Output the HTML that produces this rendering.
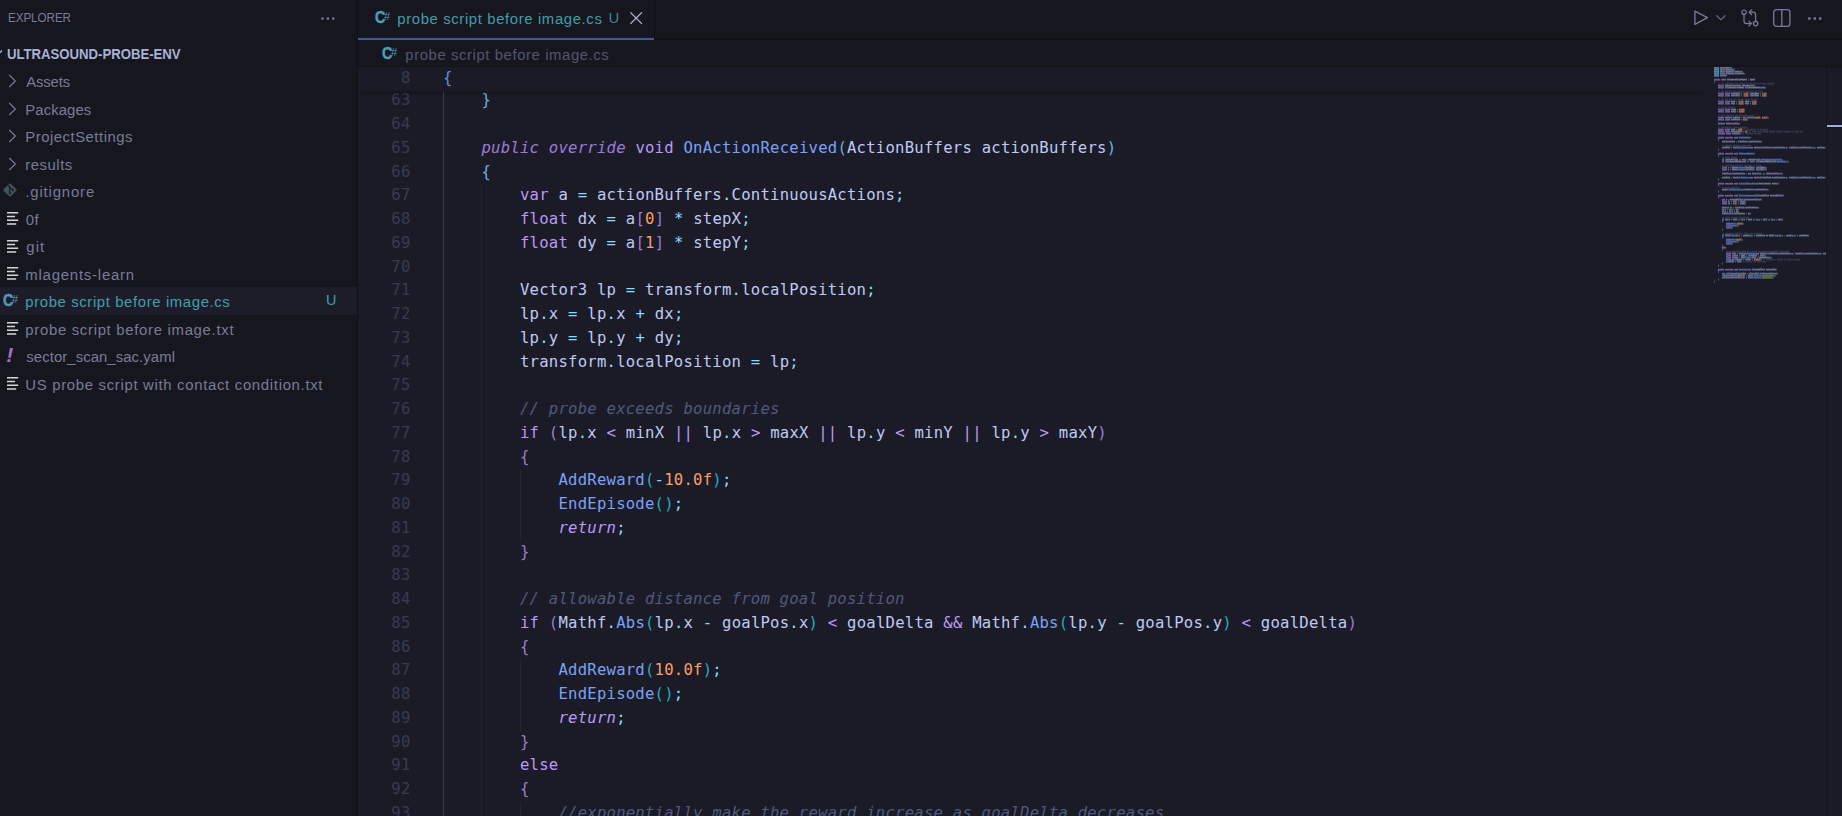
<!DOCTYPE html>
<html lang="en">
<head>
<meta charset="utf-8">
<title>probe script before image.cs - ultrasound-probe-env</title>
<style>
*{box-sizing:border-box;margin:0;padding:0}
html,body{width:1842px;height:816px;overflow:hidden;background:#1a1b26}
body{position:relative;font-family:"Liberation Sans",sans-serif;color:#787c99}
svg{position:absolute;overflow:visible}
.t{position:absolute;white-space:nowrap;transform-origin:0 50%}
/* ---------- sidebar ---------- */
#sidebar{position:absolute;left:0;top:0;width:358px;height:816px;background:#16161e;border-right:1px solid #101014;overflow:hidden}
#sb-title{top:9px;line-height:18px;color:#787c99}
#sb-head{top:45.3px;line-height:18px;font-weight:bold;color:#a9b1d6}
.row{position:absolute;left:0;width:357px;height:27.5px;white-space:nowrap}
.row .lbl{top:1.8px;line-height:27.5px;color:#787c99}
.row.sel{background:#1c1d29}
.row.sel .lbl{color:#449dab}
.row .badge{top:0;line-height:27.5px;color:#449dab}
.csi{position:absolute;width:0;height:0;white-space:nowrap;font-style:normal}
.csi b{position:absolute;left:-0.6px;top:-3.1px;font:bold 17px/20px "Liberation Sans",sans-serif;transform:scaleX(.84);transform-origin:0 50%;-webkit-text-stroke:0.5px currentColor}
.csi i{position:absolute;left:8.5px;top:0px;font:normal 10px/12px "Liberation Sans",sans-serif;font-style:normal;transform:scaleX(1.1);transform-origin:0 50%}
#mm{position:absolute;top:0;width:156.5px;height:216px;overflow:hidden;font-family:"DejaVu Sans Mono","Liberation Mono",monospace;font-size:2.3px;line-height:2px;transform:scaleX(.7222);transform-origin:0 0;color:#c0caf5;white-space:pre}
#mm p{height:2px}
#mm i{font-style:normal}
.mk{color:#bb9af7}.mu{color:#7dcfff}.mf{color:#7aa2f7}.mp{color:#89ddff}.mn{color:#ff9e64}.mc{color:#51597d}.ms{color:#9ece6a}.mv{color:#c0caf5}
/* ---------- editor ---------- */
#tabs{position:absolute;left:358px;top:0;width:1484px;height:40px;background:#16161e;border-bottom:2px solid #101014}
#tab{position:absolute;left:0;top:0;width:297px;height:40px;background:#16161e;border-right:1px solid #101014}
#tab:after{content:'';position:absolute;left:0;top:38px;width:296px;height:2px;background:#3d59a1}
#tab .lbl{top:8px;line-height:22px;color:#449dab}
#tab .u{top:7px;line-height:22px;color:#449dab;opacity:.85}
#crumbs{position:absolute;left:358px;top:40px;width:1484px;height:27px;background:#16161e;border-bottom:1px solid #13131a}
#crumbs .lbl{top:3.5px;line-height:22px;color:#515670}
#editor{position:absolute;left:358px;top:67px;width:1484px;height:749px;background:#1a1b26;overflow:hidden}
.ln{position:absolute;left:0;width:52.6px;text-align:right;font-family:"DejaVu Sans Mono","Liberation Mono",monospace;font-size:15.6px;line-height:23.75px;height:23.75px;color:#363b54;white-space:pre;letter-spacing:0.229px}
.cl{position:absolute;left:85px;font-family:"DejaVu Sans Mono","Liberation Mono",monospace;font-size:15.6px;line-height:23.75px;height:23.75px;color:#c0caf5;white-space:pre;letter-spacing:0.229px}
.g{position:absolute;width:1px;background:#232433}
.ga{background:#363b54}
#sticky{position:absolute;left:0;top:0;width:1348px;height:24px;background:#1a1b26;box-shadow:0 5px 2.5px -2.5px rgba(0,0,0,.22)}
#vsb{position:absolute;left:1468px;top:0;width:16px;height:749px;background:#1a1b26;border-left:1px solid #13131b;border-top:1px solid #171821}
.k{color:#bb9af7}.m{color:#9d7cd8;font-style:italic}.r{color:#bb9af7;font-style:italic}.f{color:#7aa2f7}.p{color:#89ddff}.n{color:#ff9e64}
.c{color:#51597d;font-style:italic}
.b1{color:#698cd6}.b2{color:#68b3de}.b3{color:#9a7ecc}.b4{color:#25aac2}
</style>
</head>
<body>
<div id="sidebar">
<div id="sb-title" class="t " style="left:8.07px;font-size:13.7px;letter-spacing:-0.115px;transform:scaleX(.855);">EXPLORER</div>
<svg style="left:321px;top:16.5px" width="14" height="3" viewBox="0 0 14 3"><rect x="0.3" y="0.4" width="2.3" height="2.3" fill="#787c99"/><rect x="5.7" y="0.4" width="2.3" height="2.3" fill="#787c99"/><rect x="11.1" y="0.4" width="2.3" height="2.3" fill="#787c99"/></svg>
<svg style="left:-9px;top:47px" width="12" height="12" viewBox="0 0 12 12"><path d="M1 3.5 L6 8.5 L11 3.5" fill="none" stroke="#a9b1d6" stroke-width="1.3"/></svg>
<div id="sb-head" class="t " style="left:7.46px;font-size:14.2px;letter-spacing:-0.033px;transform:scaleX(.93);">ULTRASOUND-PROBE-ENV</div>
<div class="row " style="top:67.25px"><svg style="left:7.8px;top:7.2px" width="9" height="14" viewBox="0 0 9 14"><path d="M1.2 1 L7.4 7 L1.2 13" fill="none" stroke="#787c99" stroke-width="1.15"/></svg><span  class="t lbl" style="left:26.30px;font-size:14.9px;letter-spacing:-0.179px;">Assets</span></div>
<div class="row " style="top:94.75px"><svg style="left:7.8px;top:7.2px" width="9" height="14" viewBox="0 0 9 14"><path d="M1.2 1 L7.4 7 L1.2 13" fill="none" stroke="#787c99" stroke-width="1.15"/></svg><span  class="t lbl" style="left:25.30px;font-size:14.9px;letter-spacing:0.084px;">Packages</span></div>
<div class="row " style="top:122.25px"><svg style="left:7.8px;top:7.2px" width="9" height="14" viewBox="0 0 9 14"><path d="M1.2 1 L7.4 7 L1.2 13" fill="none" stroke="#787c99" stroke-width="1.15"/></svg><span  class="t lbl" style="left:25.30px;font-size:14.9px;letter-spacing:0.500px;">ProjectSettings</span></div>
<div class="row " style="top:149.75px"><svg style="left:7.8px;top:7.2px" width="9" height="14" viewBox="0 0 9 14"><path d="M1.2 1 L7.4 7 L1.2 13" fill="none" stroke="#787c99" stroke-width="1.15"/></svg><span  class="t lbl" style="left:25.30px;font-size:14.9px;letter-spacing:0.525px;">results</span></div>
<div class="row " style="top:177.25px"><svg style="left:2.85px;top:5.65px" width="14" height="14" viewBox="0 0 14 14"><rect x="2.05" y="2.05" width="9.9" height="9.9" rx="0.9" transform="rotate(45 7 7)" fill="#41535b"/><path d="M4.9 2.4 L10 7.2 M6.85 4.3 L6.85 10.2" stroke="#16161e" stroke-width="1.15" fill="none"/><circle cx="10" cy="7.2" r="0.95" fill="#16161e"/><circle cx="6.85" cy="10.2" r="0.95" fill="#16161e"/></svg><span  class="t lbl" style="left:25.30px;font-size:14.9px;letter-spacing:0.845px;">.gitignore</span></div>
<div class="row " style="top:204.75px"><svg style="left:7px;top:7.6px" width="12" height="13" viewBox="0 0 12 13"><rect x="0" y="0" width="11.2" height="1.5" fill="#d4d7d6"/><rect x="0" y="3.75" width="8" height="1.5" fill="#d4d7d6"/><rect x="0" y="7.5" width="11.2" height="1.5" fill="#d4d7d6"/><rect x="0" y="11.25" width="9.2" height="1.5" fill="#d4d7d6"/></svg><span  class="t lbl" style="left:25.80px;font-size:14.9px;letter-spacing:0.388px;">0f</span></div>
<div class="row " style="top:232.25px"><svg style="left:7px;top:7.6px" width="12" height="13" viewBox="0 0 12 13"><rect x="0" y="0" width="11.2" height="1.5" fill="#d4d7d6"/><rect x="0" y="3.75" width="8" height="1.5" fill="#d4d7d6"/><rect x="0" y="7.5" width="11.2" height="1.5" fill="#d4d7d6"/><rect x="0" y="11.25" width="9.2" height="1.5" fill="#d4d7d6"/></svg><span  class="t lbl" style="left:26.30px;font-size:14.9px;letter-spacing:1.085px;">git</span></div>
<div class="row " style="top:259.75px"><svg style="left:7px;top:7.6px" width="12" height="13" viewBox="0 0 12 13"><rect x="0" y="0" width="11.2" height="1.5" fill="#d4d7d6"/><rect x="0" y="3.75" width="8" height="1.5" fill="#d4d7d6"/><rect x="0" y="7.5" width="11.2" height="1.5" fill="#d4d7d6"/><rect x="0" y="11.25" width="9.2" height="1.5" fill="#d4d7d6"/></svg><span  class="t lbl" style="left:25.30px;font-size:14.9px;letter-spacing:0.796px;">mlagents-learn</span></div>
<div class="row sel" style="top:287.25px"><span class="csi" style="left:3.4px;top:6.9px;color:#519aba"><b>C</b><i>#</i></span><span  class="t lbl" style="left:25.30px;font-size:14.9px;letter-spacing:0.615px;">probe script before image.cs</span><span  class="t badge" style="left:326.10px;font-size:14.4px;letter-spacing:0.640px;">U</span></div>
<div class="row " style="top:314.75px"><svg style="left:7px;top:7.6px" width="12" height="13" viewBox="0 0 12 13"><rect x="0" y="0" width="11.2" height="1.5" fill="#d4d7d6"/><rect x="0" y="3.75" width="8" height="1.5" fill="#d4d7d6"/><rect x="0" y="7.5" width="11.2" height="1.5" fill="#d4d7d6"/><rect x="0" y="11.25" width="9.2" height="1.5" fill="#d4d7d6"/></svg><span  class="t lbl" style="left:25.30px;font-size:14.9px;letter-spacing:0.697px;">probe script before image.txt</span></div>
<div class="row " style="top:342.25px"><span style="position:absolute;left:6.3px;top:0;font-size:21px;line-height:26px;font-weight:bold;font-style:italic;color:#a074c4">!</span><span  class="t lbl" style="left:26.30px;font-size:14.9px;letter-spacing:0.072px;">sector_scan_sac.yaml</span></div>
<div class="row " style="top:369.75px"><svg style="left:7px;top:7.6px" width="12" height="13" viewBox="0 0 12 13"><rect x="0" y="0" width="11.2" height="1.5" fill="#d4d7d6"/><rect x="0" y="3.75" width="8" height="1.5" fill="#d4d7d6"/><rect x="0" y="7.5" width="11.2" height="1.5" fill="#d4d7d6"/><rect x="0" y="11.25" width="9.2" height="1.5" fill="#d4d7d6"/></svg><span  class="t lbl" style="left:25.30px;font-size:14.9px;letter-spacing:0.688px;">US probe script with contact condition.txt</span></div>
</div>
<div id="tabs">
<div id="tab"><span class="csi" style="left:17.4px;top:10.85px;color:#519aba"><b>C</b><i>#</i></span><span  class="t lbl" style="left:39.30px;font-size:14.9px;letter-spacing:0.617px;">probe script before image.cs</span><span  class="t u" style="left:250.45px;font-size:14.9px;letter-spacing:0.890px;">U</span><svg style="left:272.2px;top:11.9px" width="13" height="13" viewBox="0 0 13 13"><path d="M0.4 0.4 L11.9 11.9 M11.9 0.4 L0.4 11.9" stroke="#b4bce0" stroke-width="1.25" fill="none"/></svg></div>
<svg style="left:1336px;top:10.4px" width="15" height="16" viewBox="0 0 15 16"><path d="M0.9 1.2 L13.4 7.6 L0.9 14.4 Z" fill="none" stroke="#787c99" stroke-width="1.3" stroke-linejoin="round"/></svg><svg style="left:1357.5px;top:15px" width="10" height="6" viewBox="0 0 10 6"><path d="M0.4 0.4 L4.9 4.8 L9.4 0.4" fill="none" stroke="#787c99" stroke-width="1.1"/></svg><svg style="left:1382.5px;top:8.8px" width="18" height="18" viewBox="0 0 18 18"><circle cx="3" cy="3.2" r="2.2" fill="none" stroke="#787c99" stroke-width="1.2"/><circle cx="14.6" cy="14.6" r="2.2" fill="none" stroke="#787c99" stroke-width="1.2"/><path d="M3 5.4 V12 Q3 14.6 5.6 14.6 H10.3 M7.6 11.8 L10.4 14.6 L7.6 17.4" fill="none" stroke="#787c99" stroke-width="1.2"/><path d="M14.6 12.4 V5.8 Q14.6 3.2 12 3.2 H8.2 M11 0.4 L8.2 3.2 L11 6" fill="none" stroke="#787c99" stroke-width="1.2"/></svg><svg style="left:1415.2px;top:8.8px" width="18" height="18" viewBox="0 0 18 18"><rect x="0.7" y="0.7" width="16.2" height="16.6" rx="2.6" fill="none" stroke="#787c99" stroke-width="1.3"/><path d="M8.8 0.7 V17.3" stroke="#787c99" stroke-width="1.3"/></svg><svg style="left:1449.7px;top:16.6px" width="14" height="3" viewBox="0 0 14 3"><rect x="0.2" y="0.3" width="2.4" height="2.4" fill="#787c99"/><rect x="5.6" y="0.3" width="2.4" height="2.4" fill="#787c99"/><rect x="11" y="0.3" width="2.4" height="2.4" fill="#787c99"/></svg></div>
<div id="crumbs"><span class="csi" style="left:24.8px;top:6.7px;color:#519aba"><b>C</b><i>#</i></span><span  class="t lbl" style="left:47.30px;font-size:14.9px;letter-spacing:0.579px;">probe script before image.cs</span></div>
<div id="editor">
<div class="g ga" style="left:84.7px;top:22.32px;height:726.67px"></div>
<div class="g" style="left:123.2px;top:117.33px;height:631.67px"></div>
<div class="g" style="left:161.7px;top:402.32px;height:71.25px"></div>
<div class="g" style="left:161.7px;top:592.33px;height:71.25px"></div>
<div class="g" style="left:161.7px;top:734.83px;height:23.75px"></div>
<div class="ln" style="top:22.32px">63</div><div class="cl" style="top:22.32px">    <span class="b2">}</span></div>
<div class="ln" style="top:46.08px">64</div><div class="cl" style="top:46.08px"></div>
<div class="ln" style="top:69.83px">65</div><div class="cl" style="top:69.83px">    <span class="m">public override</span> <span class="k">void</span> <span class="f">OnActionReceived</span><span class="b2">(</span>ActionBuffers actionBuffers<span class="b2">)</span></div>
<div class="ln" style="top:93.58px">66</div><div class="cl" style="top:93.58px">    <span class="b2">{</span></div>
<div class="ln" style="top:117.33px">67</div><div class="cl" style="top:117.33px">        <span class="k">var</span> a <span class="p">=</span> actionBuffers<span class="p">.</span>ContinuousActions<span class="p">;</span></div>
<div class="ln" style="top:141.07px">68</div><div class="cl" style="top:141.07px">        <span class="k">float</span> dx <span class="p">=</span> a<span class="b3">[</span><span class="n">0</span><span class="b3">]</span> <span class="p">*</span> stepX<span class="p">;</span></div>
<div class="ln" style="top:164.82px">69</div><div class="cl" style="top:164.82px">        <span class="k">float</span> dy <span class="p">=</span> a<span class="b3">[</span><span class="n">1</span><span class="b3">]</span> <span class="p">*</span> stepY<span class="p">;</span></div>
<div class="ln" style="top:188.57px">70</div><div class="cl" style="top:188.57px"></div>
<div class="ln" style="top:212.32px">71</div><div class="cl" style="top:212.32px">        Vector3 lp <span class="p">=</span> transform<span class="p">.</span>localPosition<span class="p">;</span></div>
<div class="ln" style="top:236.07px">72</div><div class="cl" style="top:236.07px">        lp<span class="p">.</span>x <span class="p">=</span> lp<span class="p">.</span>x <span class="p">+</span> dx<span class="p">;</span></div>
<div class="ln" style="top:259.82px">73</div><div class="cl" style="top:259.82px">        lp<span class="p">.</span>y <span class="p">=</span> lp<span class="p">.</span>y <span class="p">+</span> dy<span class="p">;</span></div>
<div class="ln" style="top:283.57px">74</div><div class="cl" style="top:283.57px">        transform<span class="p">.</span>localPosition <span class="p">=</span> lp<span class="p">;</span></div>
<div class="ln" style="top:307.32px">75</div><div class="cl" style="top:307.32px"></div>
<div class="ln" style="top:331.07px">76</div><div class="cl" style="top:331.07px">        <span class="c">// probe exceeds boundaries</span></div>
<div class="ln" style="top:354.82px">77</div><div class="cl" style="top:354.82px">        <span class="k">if</span> <span class="b3">(</span>lp<span class="p">.</span>x <span class="k">&lt;</span> minX <span class="k">||</span> lp<span class="p">.</span>x <span class="k">&gt;</span> maxX <span class="k">||</span> lp<span class="p">.</span>y <span class="k">&lt;</span> minY <span class="k">||</span> lp<span class="p">.</span>y <span class="k">&gt;</span> maxY<span class="b3">)</span></div>
<div class="ln" style="top:378.57px">78</div><div class="cl" style="top:378.57px">        <span class="b3">{</span></div>
<div class="ln" style="top:402.32px">79</div><div class="cl" style="top:402.32px">            <span class="f">AddReward</span><span class="b4">(</span><span class="p">-</span><span class="n">10.0f</span><span class="b4">)</span><span class="p">;</span></div>
<div class="ln" style="top:426.07px">80</div><div class="cl" style="top:426.07px">            <span class="f">EndEpisode</span><span class="b4">()</span><span class="p">;</span></div>
<div class="ln" style="top:449.82px">81</div><div class="cl" style="top:449.82px">            <span class="r">return</span><span class="p">;</span></div>
<div class="ln" style="top:473.57px">82</div><div class="cl" style="top:473.57px">        <span class="b3">}</span></div>
<div class="ln" style="top:497.32px">83</div><div class="cl" style="top:497.32px"></div>
<div class="ln" style="top:521.08px">84</div><div class="cl" style="top:521.08px">        <span class="c">// allowable distance from goal position</span></div>
<div class="ln" style="top:544.83px">85</div><div class="cl" style="top:544.83px">        <span class="k">if</span> <span class="b3">(</span>Mathf<span class="p">.</span><span class="f">Abs</span><span class="b4">(</span>lp<span class="p">.</span>x <span class="p">-</span> goalPos<span class="p">.</span>x<span class="b4">)</span> <span class="k">&lt;</span> goalDelta <span class="k">&amp;&amp;</span> Mathf<span class="p">.</span><span class="f">Abs</span><span class="b4">(</span>lp<span class="p">.</span>y <span class="p">-</span> goalPos<span class="p">.</span>y<span class="b4">)</span> <span class="k">&lt;</span> goalDelta<span class="b3">)</span></div>
<div class="ln" style="top:568.58px">86</div><div class="cl" style="top:568.58px">        <span class="b3">{</span></div>
<div class="ln" style="top:592.33px">87</div><div class="cl" style="top:592.33px">            <span class="f">AddReward</span><span class="b4">(</span><span class="n">10.0f</span><span class="b4">)</span><span class="p">;</span></div>
<div class="ln" style="top:616.08px">88</div><div class="cl" style="top:616.08px">            <span class="f">EndEpisode</span><span class="b4">()</span><span class="p">;</span></div>
<div class="ln" style="top:639.83px">89</div><div class="cl" style="top:639.83px">            <span class="r">return</span><span class="p">;</span></div>
<div class="ln" style="top:663.58px">90</div><div class="cl" style="top:663.58px">        <span class="b3">}</span></div>
<div class="ln" style="top:687.33px">91</div><div class="cl" style="top:687.33px">        <span class="k">else</span></div>
<div class="ln" style="top:711.08px">92</div><div class="cl" style="top:711.08px">        <span class="b3">{</span></div>
<div class="ln" style="top:734.83px">93</div><div class="cl" style="top:734.83px">            <span class="c">//exponentially make the reward increase as goalDelta decreases</span></div>
<div id="sticky"><div class="ln" style="top:0.3px">8</div><div class="cl" style="top:0.3px"><span class="b1">{</span></div></div>
<svg style="left:1356px;top:0" width="113" height="216" viewBox="0 0 113 216" shape-rendering="crispEdges"><path fill="#7dcfff" fill-opacity="0.38" d="M0 0h5v2h-5zM0 2h5v2h-5zM0 4h5v2h-5zM0 6h5v2h-5zM0 8h5v2h-5z"/><path fill="#c0caf5" fill-opacity="0.22" d="M6 0h11v2h-11zM6 2h5v2h-5zM12 2h8v2h-8zM6 4h5v2h-5zM12 4h8v2h-8zM21 4h7v2h-7zM6 6h5v2h-5zM12 6h8v2h-8zM21 6h9v2h-9zM6 8h6v2h-6zM13 12h20v2h-20zM36 12h5v2h-5zM11 18h16v2h-16zM28 18h12v2h-12zM11 20h19v2h-19zM31 20h20v2h-20zM17 26h9v2h-9zM36 26h9v2h-9zM17 28h9v2h-9zM36 28h9v2h-9zM17 34h4v2h-4zM31 34h4v2h-4zM17 36h4v2h-4zM31 36h4v2h-4zM17 42h5v2h-5zM17 44h5v2h-5zM11 50h7v2h-7zM19 50h7v2h-7zM33 50h7v2h-7zM17 52h9v2h-9zM4 56h7v2h-7zM12 56h13v2h-13zM17 62h4v2h-4zM17 64h11v2h-11zM18 66h8v2h-8zM8 74h13v2h-13zM24 74h9v2h-9zM34 74h13v2h-13zM8 80h8v2h-8zM19 80h7v2h-7zM40 80h7v2h-7zM48 80h9v2h-9zM58 80h13v2h-13zM72 80h1v2h-1zM75 80h9v2h-9zM85 80h13v2h-13zM99 80h1v2h-1zM103 80h7v2h-7zM12 92h12v2h-12zM28 92h4v2h-4zM34 92h12v2h-12zM12 94h20v2h-20zM36 94h4v2h-4zM42 94h20v2h-20zM14 100h1v2h-1zM18 100h6v2h-6zM31 100h9v2h-9zM42 100h9v2h-9zM14 102h1v2h-1zM18 102h6v2h-6zM31 102h9v2h-9zM42 102h9v2h-9zM8 106h9v2h-9zM18 106h13v2h-13zM38 106h7v2h-7zM46 106h1v2h-1zM49 106h1v2h-1zM52 106h13v2h-13zM66 106h1v2h-1zM8 110h8v2h-8zM19 110h7v2h-7zM40 110h7v2h-7zM48 110h9v2h-9zM58 110h13v2h-13zM72 110h1v2h-1zM75 110h9v2h-9zM85 110h13v2h-13zM99 110h1v2h-1zM103 110h7v2h-7zM45 116h12v2h-12zM58 116h6v2h-6zM8 122h6v2h-6zM30 122h9v2h-9zM40 122h13v2h-13zM42 128h13v2h-13zM56 128h13v2h-13zM12 132h1v2h-1zM16 132h13v2h-13zM30 132h17v2h-17zM14 134h2v2h-2zM19 134h1v2h-1zM26 134h5v2h-5zM14 136h2v2h-2zM19 136h1v2h-1zM26 136h5v2h-5zM8 140h7v2h-7zM16 140h2v2h-2zM21 140h9v2h-9zM31 140h13v2h-13zM8 142h2v2h-2zM11 142h1v2h-1zM15 142h2v2h-2zM18 142h1v2h-1zM22 142h2v2h-2zM8 144h2v2h-2zM11 144h1v2h-1zM15 144h2v2h-2zM18 144h1v2h-1zM22 144h2v2h-2zM8 146h9v2h-9zM18 146h13v2h-13zM34 146h2v2h-2zM12 152h2v2h-2zM15 152h1v2h-1zM19 152h4v2h-4zM27 152h2v2h-2zM30 152h1v2h-1zM34 152h4v2h-4zM42 152h2v2h-2zM45 152h1v2h-1zM49 152h4v2h-4zM57 152h2v2h-2zM60 152h1v2h-1zM64 152h4v2h-4zM12 168h5v2h-5zM22 168h2v2h-2zM25 168h1v2h-1zM29 168h7v2h-7zM37 168h1v2h-1zM42 168h9v2h-9zM55 168h5v2h-5zM65 168h2v2h-2zM68 168h1v2h-1zM72 168h7v2h-7zM80 168h1v2h-1zM85 168h9v2h-9zM18 186h4v2h-4zM25 186h7v2h-7zM46 186h7v2h-7zM54 186h9v2h-9zM64 186h13v2h-13zM78 186h1v2h-1zM81 186h9v2h-9zM91 186h13v2h-13zM105 186h1v2h-1zM109 186h4v2h-4zM18 188h6v2h-6zM27 188h4v2h-4zM35 188h8v2h-8zM46 188h4v2h-4zM18 190h6v2h-6zM27 190h5v2h-5zM38 190h4v2h-4zM45 190h11v2h-11zM22 192h6v2h-6zM31 192h6v2h-6zM12 194h8v2h-8zM23 194h4v2h-4zM38 202h13v2h-13zM52 202h10v2h-10zM12 206h20v2h-20zM35 206h10v2h-10zM46 206h17v2h-17zM8 208h20v2h-20zM34 208h5v2h-5zM8 210h20v2h-20zM34 210h5v2h-5z"/><path fill="#89ddff" fill-opacity="0.18" d="M17 0h1v2h-1zM11 2h1v2h-1zM20 2h1v2h-1zM11 4h1v2h-1zM20 4h1v2h-1zM28 4h1v2h-1zM11 6h1v2h-1zM20 6h1v2h-1zM30 6h1v2h-1zM12 8h1v2h-1zM34 12h1v2h-1zM0 14h1v2h-1zM40 18h1v2h-1zM51 20h1v2h-1zM27 26h1v2h-1zM29 26h1v2h-1zM34 26h1v2h-1zM46 26h1v2h-1zM52 26h1v2h-1zM27 28h1v2h-1zM29 28h1v2h-1zM34 28h1v2h-1zM46 28h1v2h-1zM52 28h1v2h-1zM22 34h1v2h-1zM24 34h1v2h-1zM29 34h1v2h-1zM36 34h1v2h-1zM42 34h1v2h-1zM22 36h1v2h-1zM24 36h1v2h-1zM29 36h1v2h-1zM36 36h1v2h-1zM42 36h1v2h-1zM23 42h1v2h-1zM30 42h1v2h-1zM23 44h1v2h-1zM30 44h1v2h-1zM27 50h1v2h-1zM40 50h1v2h-1zM46 50h1v2h-1zM53 50h2v2h-2zM27 52h1v2h-1zM33 52h1v2h-1zM25 56h1v2h-1zM22 62h1v2h-1zM28 62h1v2h-1zM29 64h1v2h-1zM33 64h1v2h-1zM26 66h1v2h-1zM35 70h2v2h-2zM4 72h1v2h-1zM22 74h1v2h-1zM33 74h1v2h-1zM47 74h1v2h-1zM17 80h1v2h-1zM26 80h1v2h-1zM35 80h1v2h-1zM47 80h1v2h-1zM57 80h1v2h-1zM71 80h1v2h-1zM73 80h1v2h-1zM84 80h1v2h-1zM98 80h1v2h-1zM100 80h2v2h-2zM110 80h2v2h-2zM4 82h1v2h-1zM39 86h2v2h-2zM4 88h1v2h-1zM11 92h1v2h-1zM25 92h2v2h-2zM32 92h1v2h-1zM46 92h1v2h-1zM66 92h3v2h-3zM11 94h1v2h-1zM33 94h2v2h-2zM40 94h1v2h-1zM62 94h1v2h-1zM72 94h3v2h-3zM16 100h1v2h-1zM24 100h1v2h-1zM30 100h1v2h-1zM40 100h1v2h-1zM51 100h2v2h-2zM16 102h1v2h-1zM24 102h1v2h-1zM30 102h1v2h-1zM40 102h1v2h-1zM51 102h2v2h-2zM17 106h1v2h-1zM32 106h1v2h-1zM45 106h1v2h-1zM47 106h1v2h-1zM50 106h1v2h-1zM65 106h1v2h-1zM67 106h2v2h-2zM17 110h1v2h-1zM26 110h1v2h-1zM35 110h1v2h-1zM47 110h1v2h-1zM57 110h1v2h-1zM71 110h1v2h-1zM73 110h1v2h-1zM84 110h1v2h-1zM98 110h1v2h-1zM100 110h2v2h-2zM110 110h2v2h-2zM4 112h1v2h-1zM44 116h1v2h-1zM64 116h1v2h-1zM4 118h1v2h-1zM14 122h1v2h-1zM29 122h1v2h-1zM39 122h1v2h-1zM53 122h2v2h-2zM4 124h1v2h-1zM41 128h1v2h-1zM69 128h1v2h-1zM4 130h1v2h-1zM14 132h1v2h-1zM29 132h1v2h-1zM47 132h1v2h-1zM17 134h1v2h-1zM20 134h1v2h-1zM22 134h1v2h-1zM24 134h1v2h-1zM31 134h1v2h-1zM17 136h1v2h-1zM20 136h1v2h-1zM22 136h1v2h-1zM24 136h1v2h-1zM31 136h1v2h-1zM19 140h1v2h-1zM30 140h1v2h-1zM44 140h1v2h-1zM10 142h1v2h-1zM13 142h1v2h-1zM17 142h1v2h-1zM20 142h1v2h-1zM24 142h1v2h-1zM10 144h1v2h-1zM13 144h1v2h-1zM17 144h1v2h-1zM20 144h1v2h-1zM24 144h1v2h-1zM17 146h1v2h-1zM32 146h1v2h-1zM36 146h1v2h-1zM11 152h1v2h-1zM14 152h1v2h-1zM17 152h1v2h-1zM24 152h2v2h-2zM29 152h1v2h-1zM32 152h1v2h-1zM39 152h2v2h-2zM44 152h1v2h-1zM47 152h1v2h-1zM54 152h2v2h-2zM59 152h1v2h-1zM62 152h1v2h-1zM68 152h1v2h-1zM8 154h1v2h-1zM21 156h2v2h-2zM28 156h2v2h-2zM22 158h3v2h-3zM18 160h1v2h-1zM8 162h1v2h-1zM11 168h1v2h-1zM17 168h1v2h-1zM21 168h1v2h-1zM24 168h1v2h-1zM27 168h1v2h-1zM36 168h1v2h-1zM38 168h1v2h-1zM40 168h1v2h-1zM52 168h2v2h-2zM60 168h1v2h-1zM64 168h1v2h-1zM67 168h1v2h-1zM70 168h1v2h-1zM79 168h1v2h-1zM81 168h1v2h-1zM83 168h1v2h-1zM94 168h1v2h-1zM8 170h1v2h-1zM21 172h1v2h-1zM27 172h2v2h-2zM22 174h3v2h-3zM18 176h1v2h-1zM8 178h1v2h-1zM8 182h1v2h-1zM23 186h1v2h-1zM32 186h1v2h-1zM41 186h1v2h-1zM53 186h1v2h-1zM63 186h1v2h-1zM77 186h1v2h-1zM79 186h1v2h-1zM90 186h1v2h-1zM104 186h1v2h-1zM106 186h2v2h-2zM25 188h1v2h-1zM32 188h1v2h-1zM34 188h1v2h-1zM44 188h1v2h-1zM50 188h2v2h-2zM25 190h1v2h-1zM32 190h1v2h-1zM36 190h2v2h-2zM43 190h1v2h-1zM56 190h2v2h-2zM21 192h1v2h-1zM29 192h1v2h-1zM38 192h1v2h-1zM46 192h2v2h-2zM21 194h1v2h-1zM27 194h1v2h-1zM8 196h1v2h-1zM4 198h1v2h-1zM34 202h1v2h-1zM62 202h1v2h-1zM4 204h1v2h-1zM33 206h1v2h-1zM45 206h1v2h-1zM63 206h1v2h-1zM28 208h1v2h-1zM30 208h1v2h-1zM32 208h1v2h-1zM39 208h1v2h-1zM47 208h1v2h-1zM60 208h2v2h-2zM28 210h1v2h-1zM30 210h1v2h-1zM32 210h1v2h-1zM39 210h1v2h-1zM47 210h1v2h-1zM58 210h2v2h-2zM4 212h1v2h-1zM0 214h1v2h-1z"/><path fill="#bb9af7" fill-opacity="0.30" d="M0 12h6v2h-6zM7 12h5v2h-5zM4 18h6v2h-6zM4 20h6v2h-6zM4 26h6v2h-6zM11 26h5v2h-5zM4 28h6v2h-6zM11 28h5v2h-5zM4 34h6v2h-6zM11 34h5v2h-5zM4 36h6v2h-6zM11 36h5v2h-5zM4 42h6v2h-6zM11 42h5v2h-5zM4 44h6v2h-6zM11 44h5v2h-5zM4 50h6v2h-6zM29 50h3v2h-3zM4 52h6v2h-6zM11 52h5v2h-5zM4 62h6v2h-6zM11 62h5v2h-5zM4 64h6v2h-6zM11 64h5v2h-5zM4 66h7v2h-7zM12 66h5v2h-5zM4 70h6v2h-6zM11 70h8v2h-8zM20 70h4v2h-4zM36 80h3v2h-3zM4 86h6v2h-6zM11 86h8v2h-8zM20 86h4v2h-4zM8 92h2v2h-2zM8 94h2v2h-2zM8 100h5v2h-5zM8 102h5v2h-5zM34 106h3v2h-3zM36 110h3v2h-3zM4 116h6v2h-6zM11 116h8v2h-8zM20 116h4v2h-4zM4 128h6v2h-6zM11 128h8v2h-8zM20 128h4v2h-4zM8 132h3v2h-3zM8 134h5v2h-5zM8 136h5v2h-5zM8 152h2v2h-2zM12 160h6v2h-6zM8 168h2v2h-2zM12 176h6v2h-6zM8 180h4v2h-4zM12 186h5v2h-5zM42 186h3v2h-3zM12 188h5v2h-5zM12 190h5v2h-5zM4 202h6v2h-6zM11 202h8v2h-8zM20 202h4v2h-4zM35 202h2v2h-2zM8 206h3v2h-3z"/><path fill="#51597d" fill-opacity="0.22" d="M4 16h2v2h-2zM7 16h3v2h-3zM11 16h9v2h-9zM21 16h3v2h-3zM25 16h6v2h-6zM32 16h2v2h-2zM35 16h3v2h-3zM39 16h5v2h-5zM45 16h2v2h-2zM48 16h4v2h-4zM53 16h7v2h-7zM4 24h2v2h-2zM7 24h3v2h-3zM11 24h3v2h-3zM15 24h3v2h-3zM19 24h3v2h-3zM23 24h8v2h-8zM32 24h8v2h-8zM41 24h2v2h-2zM44 24h5v2h-5zM4 32h2v2h-2zM7 32h3v2h-3zM11 32h3v2h-3zM15 32h3v2h-3zM19 32h3v2h-3zM23 32h7v2h-7zM31 32h5v2h-5zM37 32h6v2h-6zM4 40h2v2h-2zM7 40h6v2h-6zM14 40h7v2h-7zM4 48h2v2h-2zM7 48h4v2h-4zM12 48h8v2h-8zM21 48h3v2h-3zM25 48h9v2h-9zM35 48h5v2h-5zM4 60h2v2h-2zM7 60h11v2h-11zM19 60h6v2h-6zM26 60h7v2h-7zM30 62h2v2h-2zM33 62h9v2h-9zM43 62h2v2h-2zM46 62h8v2h-8zM35 64h2v2h-2zM38 64h5v2h-5zM44 64h4v2h-4zM49 64h5v2h-5zM55 64h6v2h-6zM62 64h6v2h-6zM69 64h8v2h-8zM78 64h2v2h-2zM81 64h4v2h-4zM86 64h3v2h-3zM28 66h2v2h-2zM31 66h8v2h-8zM40 66h2v2h-2zM43 66h4v2h-4zM8 78h2v2h-2zM11 78h7v2h-7zM19 78h8v2h-8zM28 78h4v2h-4zM33 78h4v2h-4zM8 90h2v2h-2zM11 90h5v2h-5zM17 90h6v2h-6zM8 98h2v2h-2zM11 98h9v2h-9zM21 98h8v2h-8zM30 98h8v2h-8zM39 98h2v2h-2zM42 98h5v2h-5zM8 120h2v2h-2zM11 120h5v2h-5zM17 120h8v2h-8zM8 150h2v2h-2zM11 150h5v2h-5zM17 150h7v2h-7zM25 150h10v2h-10zM8 166h2v2h-2zM11 166h9v2h-9zM21 166h8v2h-8zM30 166h4v2h-4zM35 166h4v2h-4zM40 166h8v2h-8zM12 184h15v2h-15zM28 184h4v2h-4zM33 184h3v2h-3zM37 184h6v2h-6zM44 184h8v2h-8zM53 184h2v2h-2zM56 184h9v2h-9zM66 184h9v2h-9zM49 192h2v2h-2zM52 192h8v2h-8zM61 192h1v2h-1zM63 192h6v2h-6zM70 192h2v2h-2zM73 192h6v2h-6zM80 192h6v2h-6zM29 194h2v2h-2zM32 194h6v2h-6zM39 194h3v2h-3zM43 194h4v2h-4zM48 194h4v2h-4z"/><path fill="#ff9e64" fill-opacity="0.38" d="M30 26h4v2h-4zM48 26h4v2h-4zM30 28h4v2h-4zM48 28h4v2h-4zM25 34h4v2h-4zM38 34h4v2h-4zM25 36h4v2h-4zM38 36h4v2h-4zM25 42h5v2h-5zM25 44h5v2h-5zM41 50h5v2h-5zM48 50h5v2h-5zM29 52h4v2h-4zM24 62h4v2h-4zM31 64h2v2h-2zM21 134h1v2h-1zM21 136h1v2h-1zM23 156h5v2h-5zM22 172h5v2h-5zM40 192h6v2h-6zM29 208h1v2h-1zM29 210h1v2h-1z"/><path fill="#7aa2f7" fill-opacity="0.30" d="M25 70h10v2h-10zM27 80h8v2h-8zM25 86h14v2h-14zM47 92h19v2h-19zM63 94h9v2h-9zM25 100h5v2h-5zM25 102h5v2h-5zM27 110h8v2h-8zM25 116h19v2h-19zM15 122h14v2h-14zM25 128h16v2h-16zM12 156h9v2h-9zM12 158h10v2h-10zM18 168h3v2h-3zM61 168h3v2h-3zM12 172h9v2h-9zM12 174h10v2h-10zM33 186h8v2h-8zM33 190h3v2h-3zM12 192h9v2h-9zM25 202h9v2h-9zM40 208h7v2h-7zM40 210h7v2h-7z"/><path fill="#9ece6a" fill-opacity="0.30" d="M48 208h12v2h-12zM48 210h10v2h-10z"/></svg>
<div id="mm" style="left:1356px"><p><i class="mu">using</i> <i class="mv">UnityEngine</i><i class="mp">;</i></p><p><i class="mu">using</i> <i class="mv">Unity</i><i class="mp">.</i><i class="mv">MLAgents</i><i class="mp">;</i></p><p><i class="mu">using</i> <i class="mv">Unity</i><i class="mp">.</i><i class="mv">MLAgents</i><i class="mp">.</i><i class="mv">Sensors</i><i class="mp">;</i></p><p><i class="mu">using</i> <i class="mv">Unity</i><i class="mp">.</i><i class="mv">MLAgents</i><i class="mp">.</i><i class="mv">Actuators</i><i class="mp">;</i></p><p><i class="mu">using</i> <i class="mv">System</i><i class="mp">;</i></p><p></p><p><i class="mk">public</i> <i class="mk">class</i> <i class="mv">UltrasoundProbeAgent</i> <i class="mp">:</i> <i class="mv">Agent</i></p><p><i class="mp">{</i></p><p>    <i class="mc">//</i> <i class="mc">for</i> <i class="mc">resetting</i> <i class="mc">the</i> <i class="mc">target</i> <i class="mc">at</i> <i class="mc">the</i> <i class="mc">start</i> <i class="mc">of</i> <i class="mc">each</i> <i class="mc">episode</i></p><p>    <i class="mk">public</i> <i class="mv">SphereController</i> <i class="mv">sphereScript</i><i class="mp">;</i></p><p>    <i class="mk">public</i> <i class="mv">UltrasoundProbeMesh</i> <i class="mv">ultrasoundMeshScript</i><i class="mp">;</i></p><p></p><p>    <i class="mc">//</i> <i class="mc">min</i> <i class="mc">and</i> <i class="mc">max</i> <i class="mc">for</i> <i class="mc">starting</i> <i class="mc">position</i> <i class="mc">of</i> <i class="mc">probe</i></p><p>    <i class="mk">public</i> <i class="mk">float</i> <i class="mv">startMinX</i> <i class="mp">=</i> <i class="mp">-</i><i class="mn">1.0f</i><i class="mp">,</i> <i class="mv">startMaxX</i> <i class="mp">=</i> <i class="mn">1.0f</i><i class="mp">;</i></p><p>    <i class="mk">public</i> <i class="mk">float</i> <i class="mv">startMinY</i> <i class="mp">=</i> <i class="mp">-</i><i class="mn">1.0f</i><i class="mp">,</i> <i class="mv">startMaxY</i> <i class="mp">=</i> <i class="mn">1.0f</i><i class="mp">;</i></p><p></p><p>    <i class="mc">//</i> <i class="mc">min</i> <i class="mc">and</i> <i class="mc">max</i> <i class="mc">for</i> <i class="mc">allowed</i> <i class="mc">probe</i> <i class="mc">motion</i></p><p>    <i class="mk">public</i> <i class="mk">float</i> <i class="mv">minX</i> <i class="mp">=</i> <i class="mp">-</i><i class="mn">2.5f</i><i class="mp">,</i> <i class="mv">maxX</i> <i class="mp">=</i> <i class="mn">2.5f</i><i class="mp">;</i></p><p>    <i class="mk">public</i> <i class="mk">float</i> <i class="mv">minY</i> <i class="mp">=</i> <i class="mp">-</i><i class="mn">2.5f</i><i class="mp">,</i> <i class="mv">maxY</i> <i class="mp">=</i> <i class="mn">2.5f</i><i class="mp">;</i></p><p></p><p>    <i class="mc">//</i> <i class="mc">action</i> <i class="mc">scaling</i></p><p>    <i class="mk">public</i> <i class="mk">float</i> <i class="mv">stepX</i> <i class="mp">=</i> <i class="mn">0.02f</i><i class="mp">;</i></p><p>    <i class="mk">public</i> <i class="mk">float</i> <i class="mv">stepY</i> <i class="mp">=</i> <i class="mn">0.02f</i><i class="mp">;</i></p><p></p><p>    <i class="mc">//</i> <i class="mc">goal</i> <i class="mc">position</i> <i class="mc">and</i> <i class="mc">allowable</i> <i class="mc">error</i></p><p>    <i class="mk">public</i> <i class="mv">Vector3</i> <i class="mv">goalPos</i> <i class="mp">=</i> <i class="mk">new</i> <i class="mv">Vector3</i><i class="mp">(</i><i class="mn">0.05f</i><i class="mp">,</i> <i class="mn">0.01f</i><i class="mp">);</i></p><p>    <i class="mk">public</i> <i class="mk">float</i> <i class="mv">goalDelta</i> <i class="mp">=</i> <i class="mn">0.1f</i><i class="mp">;</i></p><p></p><p>    <i class="mv">Vector3</i> <i class="mv">startLocalPos</i><i class="mp">;</i></p><p></p><p>    <i class="mc">//</i> <i class="mc">exponential</i> <i class="mc">reward</i> <i class="mc">shaping</i></p><p>    <i class="mk">public</i> <i class="mk">float</i> <i class="mv">maxR</i> <i class="mp">=</i> <i class="mn">100f</i><i class="mp">;</i> <i class="mc">//</i> <i class="mc">steepness</i> <i class="mc">of</i> <i class="mc">function</i></p><p>    <i class="mk">public</i> <i class="mk">float</i> <i class="mv">maxDistance</i> <i class="mp">=</i> <i class="mn">1f</i><i class="mp">;</i> <i class="mc">//</i> <i class="mc">stops</i> <i class="mc">very</i> <i class="mc">large</i> <i class="mc">shaped</i> <i class="mc">reward</i> <i class="mc">compared</i> <i class="mc">to</i> <i class="mc">goal</i> <i class="mc">one</i></p><p>    <i class="mk">private</i> <i class="mk">float</i> <i class="mv">prevDist</i><i class="mp">;</i> <i class="mc">//</i> <i class="mc">distance</i> <i class="mc">to</i> <i class="mc">goal</i></p><p></p><p>    <i class="mk">public</i> <i class="mk">override</i> <i class="mk">void</i> <i class="mf">Initialize</i><i class="mp">()</i></p><p>    <i class="mp">{</i></p><p>        <i class="mv">startLocalPos</i> <i class="mp">=</i> <i class="mv">transform</i><i class="mp">.</i><i class="mv">localPosition</i><i class="mp">;</i></p><p></p><p>        <i class="mc">//</i> <i class="mc">initial</i> <i class="mc">distance</i> <i class="mc">from</i> <i class="mc">goal</i></p><p>        <i class="mv">prevDist</i> <i class="mp">=</i> <i class="mv">Vector3</i><i class="mp">.</i><i class="mf">Distance</i><i class="mp">(</i><i class="mk">new</i> <i class="mv">Vector2</i><i class="mp">(</i><i class="mv">transform</i><i class="mp">.</i><i class="mv">localPosition</i><i class="mp">.</i><i class="mv">x</i><i class="mp">,</i> <i class="mv">transform</i><i class="mp">.</i><i class="mv">localPosition</i><i class="mp">.</i><i class="mv">y</i><i class="mp">),</i> <i class="mv">goalPos</i><i class="mp">);</i></p><p>    <i class="mp">}</i></p><p></p><p>    <i class="mk">public</i> <i class="mk">override</i> <i class="mk">void</i> <i class="mf">OnEpisodeBegin</i><i class="mp">()</i></p><p>    <i class="mp">{</i></p><p>        <i class="mc">//</i> <i class="mc">reset</i> <i class="mc">target</i></p><p>        <i class="mk">if</i> <i class="mp">(</i><i class="mv">sphereScript</i> <i class="mp">!=</i> <i class="mv">null</i><i class="mp">)</i> <i class="mv">sphereScript</i><i class="mp">.</i><i class="mf">ResetSpherePosition</i><i class="mp">();</i></p><p>        <i class="mk">if</i> <i class="mp">(</i><i class="mv">ultrasoundMeshScript</i> <i class="mp">!=</i> <i class="mv">null</i><i class="mp">)</i> <i class="mv">ultrasoundMeshScript</i><i class="mp">.</i><i class="mf">ResetMesh</i><i class="mp">();</i></p><p></p><p>        <i class="mc">//</i> <i class="mc">randomize</i> <i class="mc">starting</i> <i class="mc">position</i> <i class="mc">of</i> <i class="mc">probe</i></p><p>        <i class="mk">float</i> <i class="mv">x</i> <i class="mp">=</i> <i class="mv">Random</i><i class="mp">.</i><i class="mf">Range</i><i class="mp">(</i><i class="mv">startMinX</i><i class="mp">,</i> <i class="mv">startMaxX</i><i class="mp">);</i></p><p>        <i class="mk">float</i> <i class="mv">y</i> <i class="mp">=</i> <i class="mv">Random</i><i class="mp">.</i><i class="mf">Range</i><i class="mp">(</i><i class="mv">startMinY</i><i class="mp">,</i> <i class="mv">startMaxY</i><i class="mp">);</i></p><p></p><p>        <i class="mv">transform</i><i class="mp">.</i><i class="mv">localPosition</i> <i class="mp">=</i> <i class="mk">new</i> <i class="mv">Vector3</i><i class="mp">(</i><i class="mv">x</i><i class="mp">,</i> <i class="mv">y</i><i class="mp">,</i> <i class="mv">startLocalPos</i><i class="mp">.</i><i class="mv">z</i><i class="mp">);</i></p><p></p><p>        <i class="mv">prevDist</i> <i class="mp">=</i> <i class="mv">Vector3</i><i class="mp">.</i><i class="mf">Distance</i><i class="mp">(</i><i class="mk">new</i> <i class="mv">Vector2</i><i class="mp">(</i><i class="mv">transform</i><i class="mp">.</i><i class="mv">localPosition</i><i class="mp">.</i><i class="mv">x</i><i class="mp">,</i> <i class="mv">transform</i><i class="mp">.</i><i class="mv">localPosition</i><i class="mp">.</i><i class="mv">y</i><i class="mp">),</i> <i class="mv">goalPos</i><i class="mp">);</i></p><p>    <i class="mp">}</i></p><p></p><p>    <i class="mk">public</i> <i class="mk">override</i> <i class="mk">void</i> <i class="mf">CollectObservations</i><i class="mp">(</i><i class="mv">VectorSensor</i> <i class="mv">sensor</i><i class="mp">)</i></p><p>    <i class="mp">{</i></p><p>        <i class="mc">//</i> <i class="mc">probe</i> <i class="mc">position</i></p><p>        <i class="mv">sensor</i><i class="mp">.</i><i class="mf">AddObservation</i><i class="mp">(</i><i class="mv">transform</i><i class="mp">.</i><i class="mv">localPosition</i><i class="mp">);</i></p><p>    <i class="mp">}</i></p><p></p><p>    <i class="mk">public</i> <i class="mk">override</i> <i class="mk">void</i> <i class="mf">OnActionReceived</i><i class="mp">(</i><i class="mv">ActionBuffers</i> <i class="mv">actionBuffers</i><i class="mp">)</i></p><p>    <i class="mp">{</i></p><p>        <i class="mk">var</i> <i class="mv">a</i> <i class="mp">=</i> <i class="mv">actionBuffers</i><i class="mp">.</i><i class="mv">ContinuousActions</i><i class="mp">;</i></p><p>        <i class="mk">float</i> <i class="mv">dx</i> <i class="mp">=</i> <i class="mv">a</i><i class="mp">[</i><i class="mn">0</i><i class="mp">]</i> <i class="mp">*</i> <i class="mv">stepX</i><i class="mp">;</i></p><p>        <i class="mk">float</i> <i class="mv">dy</i> <i class="mp">=</i> <i class="mv">a</i><i class="mp">[</i><i class="mn">1</i><i class="mp">]</i> <i class="mp">*</i> <i class="mv">stepY</i><i class="mp">;</i></p><p></p><p>        <i class="mv">Vector3</i> <i class="mv">lp</i> <i class="mp">=</i> <i class="mv">transform</i><i class="mp">.</i><i class="mv">localPosition</i><i class="mp">;</i></p><p>        <i class="mv">lp</i><i class="mp">.</i><i class="mv">x</i> <i class="mp">=</i> <i class="mv">lp</i><i class="mp">.</i><i class="mv">x</i> <i class="mp">+</i> <i class="mv">dx</i><i class="mp">;</i></p><p>        <i class="mv">lp</i><i class="mp">.</i><i class="mv">y</i> <i class="mp">=</i> <i class="mv">lp</i><i class="mp">.</i><i class="mv">y</i> <i class="mp">+</i> <i class="mv">dy</i><i class="mp">;</i></p><p>        <i class="mv">transform</i><i class="mp">.</i><i class="mv">localPosition</i> <i class="mp">=</i> <i class="mv">lp</i><i class="mp">;</i></p><p></p><p>        <i class="mc">//</i> <i class="mc">probe</i> <i class="mc">exceeds</i> <i class="mc">boundaries</i></p><p>        <i class="mk">if</i> <i class="mp">(</i><i class="mv">lp</i><i class="mp">.</i><i class="mv">x</i> <i class="mp">&lt;</i> <i class="mv">minX</i> <i class="mp">||</i> <i class="mv">lp</i><i class="mp">.</i><i class="mv">x</i> <i class="mp">&gt;</i> <i class="mv">maxX</i> <i class="mp">||</i> <i class="mv">lp</i><i class="mp">.</i><i class="mv">y</i> <i class="mp">&lt;</i> <i class="mv">minY</i> <i class="mp">||</i> <i class="mv">lp</i><i class="mp">.</i><i class="mv">y</i> <i class="mp">&gt;</i> <i class="mv">maxY</i><i class="mp">)</i></p><p>        <i class="mp">{</i></p><p>            <i class="mf">AddReward</i><i class="mp">(-</i><i class="mn">10.0f</i><i class="mp">);</i></p><p>            <i class="mf">EndEpisode</i><i class="mp">();</i></p><p>            <i class="mk">return</i><i class="mp">;</i></p><p>        <i class="mp">}</i></p><p></p><p>        <i class="mc">//</i> <i class="mc">allowable</i> <i class="mc">distance</i> <i class="mc">from</i> <i class="mc">goal</i> <i class="mc">position</i></p><p>        <i class="mk">if</i> <i class="mp">(</i><i class="mv">Mathf</i><i class="mp">.</i><i class="mf">Abs</i><i class="mp">(</i><i class="mv">lp</i><i class="mp">.</i><i class="mv">x</i> <i class="mp">-</i> <i class="mv">goalPos</i><i class="mp">.</i><i class="mv">x</i><i class="mp">)</i> <i class="mp">&lt;</i> <i class="mv">goalDelta</i> <i class="mp">&amp;&amp;</i> <i class="mv">Mathf</i><i class="mp">.</i><i class="mf">Abs</i><i class="mp">(</i><i class="mv">lp</i><i class="mp">.</i><i class="mv">y</i> <i class="mp">-</i> <i class="mv">goalPos</i><i class="mp">.</i><i class="mv">y</i><i class="mp">)</i> <i class="mp">&lt;</i> <i class="mv">goalDelta</i><i class="mp">)</i></p><p>        <i class="mp">{</i></p><p>            <i class="mf">AddReward</i><i class="mp">(</i><i class="mn">10.0f</i><i class="mp">);</i></p><p>            <i class="mf">EndEpisode</i><i class="mp">();</i></p><p>            <i class="mk">return</i><i class="mp">;</i></p><p>        <i class="mp">}</i></p><p>        <i class="mk">else</i></p><p>        <i class="mp">{</i></p><p>            <i class="mc">//exponentially</i> <i class="mc">make</i> <i class="mc">the</i> <i class="mc">reward</i> <i class="mc">increase</i> <i class="mc">as</i> <i class="mc">goalDelta</i> <i class="mc">decreases</i></p><p>            <i class="mk">float</i> <i class="mv">dist</i> <i class="mp">=</i> <i class="mv">Vector3</i><i class="mp">.</i><i class="mf">Distance</i><i class="mp">(</i><i class="mk">new</i> <i class="mv">Vector2</i><i class="mp">(</i><i class="mv">transform</i><i class="mp">.</i><i class="mv">localPosition</i><i class="mp">.</i><i class="mv">x</i><i class="mp">,</i> <i class="mv">transform</i><i class="mp">.</i><i class="mv">localPosition</i><i class="mp">.</i><i class="mv">y</i><i class="mp">),</i> <i class="mv">goalPos</i><i class="mp">);</i></p><p>            <i class="mk">float</i> <i class="mv">closer</i> <i class="mp">=</i> <i class="mv">maxR</i> <i class="mp">*</i> <i class="mp">(</i><i class="mv">prevDist</i> <i class="mp">-</i> <i class="mv">dist</i><i class="mp">);</i></p><p>            <i class="mk">float</i> <i class="mv">shaped</i> <i class="mp">=</i> <i class="mv">Mathf</i><i class="mp">.</i><i class="mf">Exp</i><i class="mp">(-</i><i class="mv">dist</i> <i class="mp">/</i> <i class="mv">maxDistance</i><i class="mp">);</i></p><p>            <i class="mf">AddReward</i><i class="mp">(</i><i class="mv">shaped</i> <i class="mp">*</i> <i class="mv">closer</i> <i class="mp">-</i> <i class="mn">0.001f</i><i class="mp">);</i> <i class="mc">//</i> <i class="mc">penalise</i> <i class="mc">a</i> <i class="mc">little</i> <i class="mc">if</i> <i class="mc">moving</i> <i class="mc">slower</i></p><p>            <i class="mv">prevDist</i> <i class="mp">=</i> <i class="mv">dist</i><i class="mp">;</i> <i class="mc">//</i> <i class="mc">update</i> <i class="mc">for</i> <i class="mc">next</i> <i class="mc">step</i></p><p>        <i class="mp">}</i></p><p>    <i class="mp">}</i></p><p></p><p>    <i class="mk">public</i> <i class="mk">override</i> <i class="mk">void</i> <i class="mf">Heuristic</i><i class="mp">(</i><i class="mk">in</i> <i class="mv">ActionBuffers</i> <i class="mv">actionsOut</i><i class="mp">)</i></p><p>    <i class="mp">{</i></p><p>        <i class="mk">var</i> <i class="mv">continuousActionsOut</i> <i class="mp">=</i> <i class="mv">actionsOut</i><i class="mp">.</i><i class="mv">ContinuousActions</i><i class="mp">;</i></p><p>        <i class="mv">continuousActionsOut</i><i class="mp">[</i><i class="mn">0</i><i class="mp">]</i> <i class="mp">=</i> <i class="mv">Input</i><i class="mp">.</i><i class="mf">GetAxis</i><i class="mp">(</i><i class="ms">&quot;Horizontal&quot;</i><i class="mp">);</i></p><p>        <i class="mv">continuousActionsOut</i><i class="mp">[</i><i class="mn">1</i><i class="mp">]</i> <i class="mp">=</i> <i class="mv">Input</i><i class="mp">.</i><i class="mf">GetAxis</i><i class="mp">(</i><i class="ms">&quot;Vertical&quot;</i><i class="mp">);</i></p><p>    <i class="mp">}</i></p><p><i class="mp">}</i></p></div>
<div id="vsb"><div style="position:absolute;left:0;top:56.8px;width:15px;height:2.6px;background:#a4acd8;box-shadow:0 0 0 1px #14141c"></div></div>
</div>
</body>
</html>
